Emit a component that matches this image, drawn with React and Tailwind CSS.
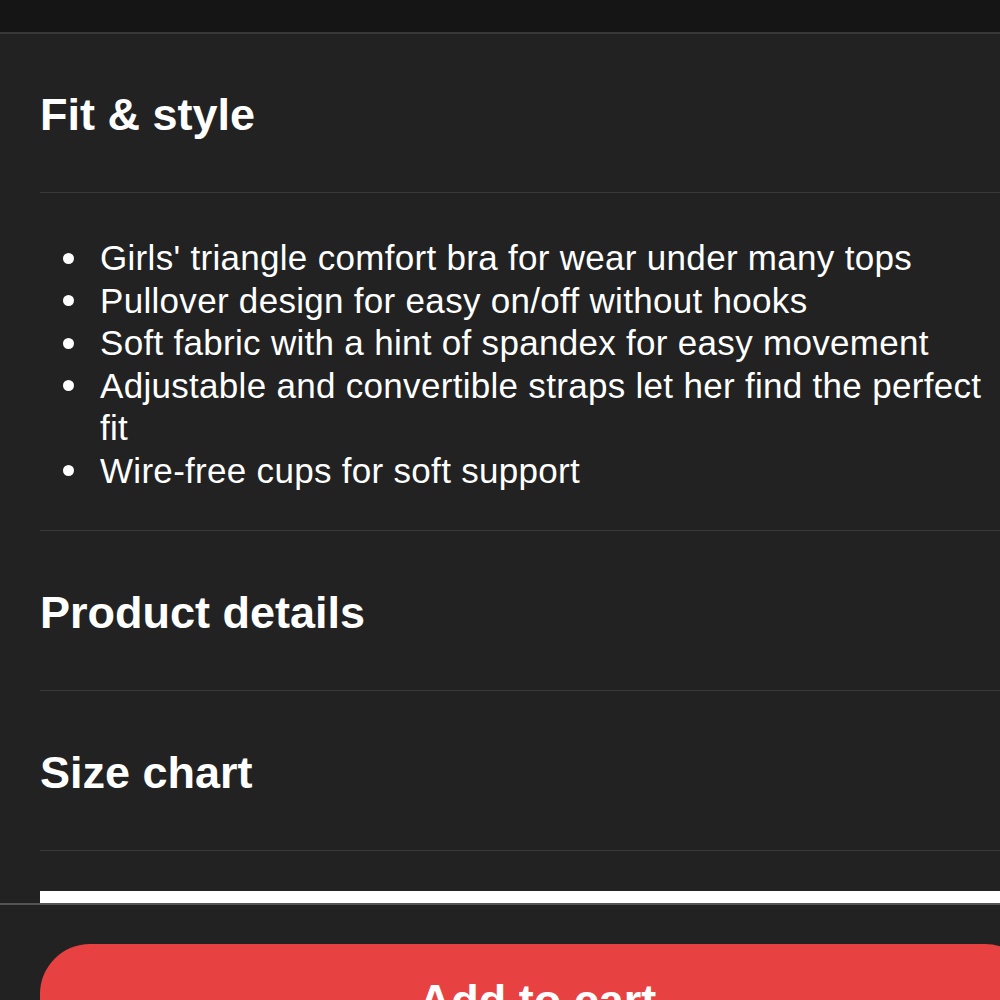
const bullets = [
  "Girls' triangle comfort bra for wear under many tops",
  "Pullover design for easy on/off without hooks",
  "Soft fabric with a hint of spandex for easy movement",
  "Adjustable and convertible straps let her find the perfect fit",
  "Wire-free cups for soft support",
];

const SectionHeading = ({ title }) => (
  <div className="h-[160px] flex items-center border-b border-[#3a3a3a]">
    <h2 className="text-[45px] font-bold text-white leading-none pt-[3px]">{title}</h2>
  </div>
);

export default function App() {
  return (
    <div
      className="w-[1000px] h-[1000px] overflow-hidden bg-[#222222] text-white"
      style={{ fontFamily: "'Liberation Sans', Arial, sans-serif" }}
    >
      {/* top bar */}
      <div className="h-[34px] bg-[#151515] border-b-2 border-[#383838]" />

      <div className="pl-[40px]">
        <div className="h-[159px] flex items-center border-b border-[#3a3a3a]">
          <h2 className="text-[45px] font-bold leading-none pt-[3px]">Fit &amp; style</h2>
        </div>

        <div className="pt-[44px] pb-[38px] border-b border-[#3a3a3a]">
          <ul className="text-[35px] leading-[42.5px] tracking-[0.3px]">
            {bullets.map((b) => (
              <li key={b} className="flex">
                <span className="w-[60px] shrink-0 h-[42.5px] flex items-center pl-[23px]">
                  <span className="block w-[11px] h-[11px] rounded-full bg-white" />
                </span>
                <span>{b}</span>
              </li>
            ))}
          </ul>
        </div>

        <SectionHeading title="Product details" />
        <SectionHeading title="Size chart" />

        <div className="h-[40px]" />
      </div>

      <div className="flex border-b-2 border-[#555555]">
        <div className="w-[40px]" />
        <div className="flex-1 h-[12px] bg-white" />
      </div>

      <div className="pl-[40px] pt-[39px]">
        <button className="w-[995px] h-[110px] bg-[#e84142] rounded-[50px] text-white text-[45px] font-bold pt-[4px]">
          Add to cart
        </button>
      </div>
    </div>
  );
}
